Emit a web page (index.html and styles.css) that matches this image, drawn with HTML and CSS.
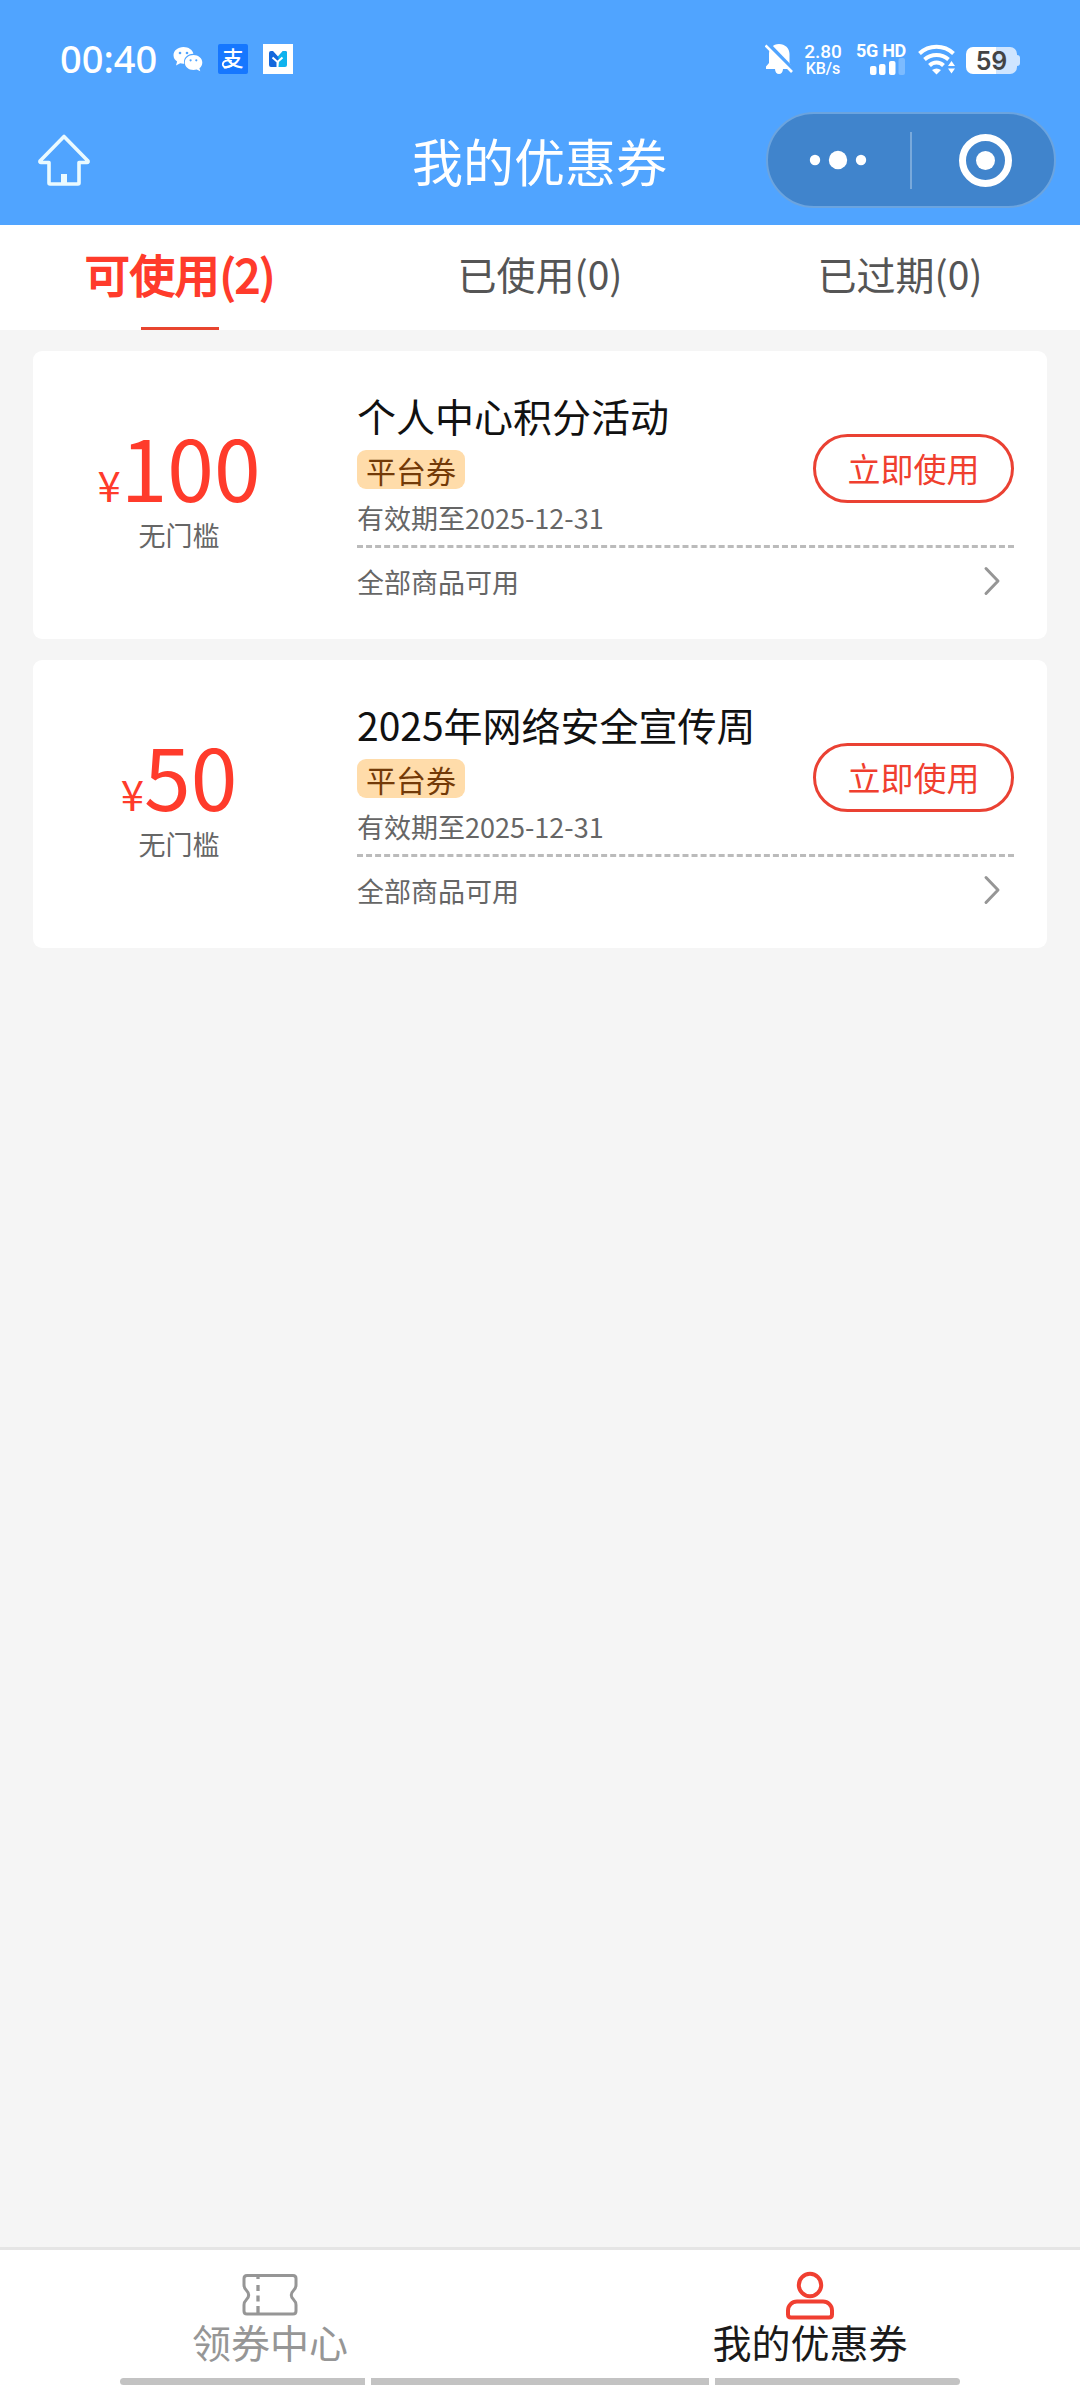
FILE: index.html
```html
<!DOCTYPE html>
<html lang="zh-CN">
<head>
<meta charset="utf-8">
<meta name="viewport" content="width=device-width">
<title>我的优惠券</title>
<link rel="stylesheet" href="styles.css">
</head>
<body>
<div class="app">
  <header class="header">
    <div class="status">
      <span class="clock">00:40</span>
      <svg class="ic-wechat" width="30" height="26" viewBox="0 0 30 26"><g fill="#fff"><path d="M10.500 1C4.800 1 .5 4.600.5 9.300c0 2.700 1.500 4.900 3.600 6.300L3 19.500l4.200-2.200c1.200.4 2.800.5 4 .4C10 12 14.500 7.600 20.400 7.700 19.500 3.800 15.500 1 10.500 1z"/><path d="M20.500 9c-5 0-8.700 3.300-8.700 7.400s3.700 7.500 8.700 7.500c1.100 0 2.200-.2 3.200-.5l3.600 1.900-.9-3.100c1.800-1.400 2.900-3.500 2.900-5.800C29.300 12.300 25.400 9 20.500 9z"/></g><g fill="#50a4ff"><circle cx="7" cy="7" r="1.300"/><circle cx="14" cy="7" r="1.300"/><circle cx="17.600" cy="14.300" r="1.100"/><circle cx="23.300" cy="14.300" r="1.100"/></g></svg>
      <span class="alipay">支<svg class="alipay-tail" width="30" height="30" viewBox="0 0 30 30"><path d="M14 17C9 15.500 4.800 17 4.800 20.500s6.700 4.500 11.700-1.500" fill="none" stroke="#fff" stroke-width="1.800"/></svg></span>
      <svg class="ic-m" width="30" height="30" viewBox="0 0 30 30"><path fill="#fff" d="M0 0h30v30H0z"/><path fill="#1467dc" d="M6 9q0-2 2-2h2l5 5.500L20 7h2q2 0 2 2v4l-9 5-1 5H8q-2 0-2-2z"/><path fill="#0fb3ee" d="M24 9q0-2-2-2h-2l-5 5.500 1 4.500-1 6h7q2 0 2-2z"/><path d="M9.500 13.500l5 4.500 5-4.500M14.500 17.500V24" fill="none" stroke="#fff" stroke-width="2"/></svg>
      <div class="status-right">
        <svg class="ic-bell" width="28" height="32" viewBox="0 0 28 32"><path fill="#fff" d="M14 1c6 0 10.500 4.300 10.500 10v9l3 5v1H18c0 3-1.800 5-4 5s-4-2-4-5H1v-2.500L4 20v-9C4 5.500 8 1 14 1z"/><path d="M1.500 0l28 29" stroke="#50a4ff" stroke-width="5"/><path d="M.5 2.500l26.500 26.500" stroke="#fff" stroke-width="2.600"/></svg>
        <div class="speed"><span class="speed-n">2.80</span><span class="speed-u">KB/s</span></div>
        <div class="signal"><span class="net">5G HD</span><svg width="36" height="17" viewBox="0 0 36 17" fill="#fff"><rect x="1" y="8" width="6.500" height="9" rx="2"/><rect x="10" y="6" width="6.500" height="11" rx="2"/><rect x="20" y="3" width="6.500" height="14" rx="2"/><rect x="29.500" y="0" width="6.500" height="17" rx="2" opacity=".25"/></svg></div>
        <svg class="ic-wifi" width="38" height="31" viewBox="0 0 38 31"><g fill="none" stroke="#fff" stroke-width="4"><path d="M1.500 9.500C11 .5 26 .5 35.500 9.500"/><path d="M6.500 15.500c7-6 17-6 24 0"/><path d="M11.500 21.500c4-4 10-4 14 0"/></g><path d="M14 26q4.500-3 9 0l-4.500 4.500z" fill="#fff"/><path d="M33.500 13l5.500 7.500-5.500 10-5.500-10z" fill="#50a4ff"/><path d="M33.500 17l3.500 5h-7zM33.500 29.500l3.500-5h-7z" fill="#fff"/></svg>
        <div class="battery"><span>59</span></div>
      </div>
    </div>
    <div class="navbar">
      <svg class="ic-home" width="54" height="54" viewBox="0 0 54 54" fill="none" stroke="#eafaff" stroke-width="3.600" stroke-linejoin="round"><path d="M27 3.500L3 28q-.5 1.500 1 1.500h8V50q0 1 1 1h28q1 0 1-1V29.500h8q1.500 0 1-1.500z"/><path d="M27 41v10" stroke-width="6"/></svg>
      <h1 class="title">我的优惠券</h1>
      <div class="capsule">
        <svg width="286" height="92" viewBox="0 0 286 92" fill="#fff"><circle cx="47" cy="46" r="5.200"/><circle cx="70" cy="46" r="9.200"/><circle cx="93" cy="46" r="5.200"/><path d="M142 18h2v57h-2z" opacity=".3"/><circle cx="217.500" cy="46.500" r="23" fill="none" stroke="#fff" stroke-width="7"/><circle cx="217.500" cy="46.500" r="9.500"/></svg>
      </div>
    </div>
  </header>
  <nav class="tabs">
    <div class="tab tab-on">可使用(2)</div>
    <div class="tab">已使用(0)</div>
    <div class="tab">已过期(0)</div>
  </nav>
  <main class="list">
    <article class="card">
      <div class="amount"><div class="price"><span class="yen">¥</span>100</div><div class="limit">无门槛</div></div>
      <div class="body">
        <div class="top">
          <div class="info"><h2 class="name">个人中心积分活动</h2><span class="tag">平台券</span><div class="date">有效期至2025-12-31</div></div>
          <div class="use">立即使用</div>
        </div>
        <div class="scope"><span>全部商品可用</span><svg class="chev" width="18" height="30" viewBox="0 0 18 30"><path d="M3 2.500L15 15 3 27.500" fill="none" stroke="#969696" stroke-width="3" stroke-linecap="round" stroke-linejoin="round"/></svg></div>
      </div>
    </article>
    <article class="card">
      <div class="amount"><div class="price"><span class="yen">¥</span>50</div><div class="limit">无门槛</div></div>
      <div class="body">
        <div class="top">
          <div class="info"><h2 class="name">2025年网络安全宣传周</h2><span class="tag">平台券</span><div class="date">有效期至2025-12-31</div></div>
          <div class="use">立即使用</div>
        </div>
        <div class="scope"><span>全部商品可用</span><svg class="chev" width="18" height="30" viewBox="0 0 18 30"><path d="M3 2.500L15 15 3 27.500" fill="none" stroke="#969696" stroke-width="3" stroke-linecap="round" stroke-linejoin="round"/></svg></div>
      </div>
    </article>
  </main>
  <footer class="tabbar">
    <div class="item"><svg width="60" height="50" viewBox="0 0 60 50" fill="none" stroke="#969696" stroke-width="3"><path d="M7 5.500h46q3 0 3 3V15q0 3-2.500 5.500-4.500 4.500 0 9Q56 32 56 35v6q0 3-3 3H7q-3 0-3-3v-6q0-3 2.500-5.500 4.500-4.500 0-9Q4 18 4 15V8.500q0-3 3-3z"/><path d="M18 6v3M18 15v6M18 25.500v6M18 36v7" stroke-width="3.300"/></svg><span>领券中心</span></div>
    <div class="item item-on"><svg width="60" height="50" viewBox="0 0 60 50" fill="none" stroke="#f03f31" stroke-width="4"><circle cx="30" cy="15" r="11.200"/><path d="M17 33h26c5 0 9 4 9 9v4q0 3-3 3H11q-3 0-3-3v-4c0-5 4-9 9-9z" transform="translate(0 -1.500)"/></svg><span>我的优惠券</span></div>
    <div class="gesture"><i class="g1"></i><i class="g2"></i><i class="g3"></i></div>
  </footer>
</div>
</body>
</html>
```
FILE: styles.css
```css
* { box-sizing: border-box; margin: 0; padding: 0; }
body { font-family: "Noto Sans CJK SC", sans-serif; background: #f5f5f5; }
svg { display: block; flex: none; }
.app { width: 1080px; height: 2388px; display: flex; flex-direction: column; overflow: hidden; }
.header { height: 225px; background: #50a4ff; color: #fff; }
.status { height: 112px; padding: 43px 60px 0 60px; display: flex; align-items: flex-start; }
.clock { width: 98px; font: 500 38px/30px "Noto Sans", sans-serif; white-space: nowrap; }
.ic-wechat { margin: 3px 0 0 15px; }
.alipay { position: relative; width: 30px; height: 30px; margin: 1px 0 0 15px; border-radius: 2px; background: #1677ff; text-align: center; font-weight: 500; font-size: 21px; line-height: 27px; }
.alipay-tail { position: absolute; left: 0; top: 0; }
.ic-m { margin: 1px 0 0 15px; }
.status-right { margin-left: auto; display: flex; align-items: flex-start; }
.ic-bell { margin-right: 10px; }
.speed { width: 40px; display: flex; flex-direction: column; align-items: center; font-family: Roboto, sans-serif; font-weight: 500; }
.speed-n { font-size: 19px; line-height: 17px; }
.speed-u { font-size: 16px; line-height: 17px; }
.signal { width: 50px; margin-left: 13px; display: flex; flex-direction: column; align-items: flex-end; }
.signal svg { margin-right: 1px; }
.net { width: 100%; font: 700 18px/15px Roboto, sans-serif; letter-spacing: -0.3px; white-space: nowrap; }
.ic-wifi { margin: 1px 0 0 12px; }
.battery { position: relative; width: 51px; height: 27px; margin: 4px 3px 0 10px; border-radius: 7px; background: linear-gradient(90deg, #fff 59%, #cfe5ff 59%); color: #444; text-align: center; font: 600 25px/28px Inter, sans-serif; }
.battery::after { content: ""; position: absolute; right: -3px; top: 8px; width: 3px; height: 11px; border-radius: 0 3px 3px 0; background: #cfe5ff; }
.navbar { height: 96px; display: grid; grid-template-columns: 339px 1fr 290px; padding: 0 24px 0 37px; align-items: center; }
.title { padding-left: 36px; font-size: 51px; line-height: 96px; font-weight: 400; white-space: nowrap; }
.capsule { height: 96px; border: 2px solid #6ba4df; border-radius: 48px; background: #4084cc; }
.tabs { height: 105px; background: #fff; display: flex; }
.tab { flex: 1; text-align: center; font-size: 39px; line-height: 96px; color: #555; position: relative; }
.tab-on { color: #ff3b2b; font-size: 45px; line-height: 98px; -webkit-text-stroke: 1.8px #ff3b2b; }
.tab-on::after { content: ""; position: absolute; left: 141px; bottom: 0; width: 78px; height: 3px; background: #e8452f; }
.list { flex: 1; padding: 21px 33px; display: flex; flex-direction: column; gap: 21px; }
.card { height: 288px; background: #fff; border-radius: 9px; display: grid; grid-template-columns: 292px 1fr; }
.amount { padding-top: 73px; text-align: center; }
.price { font-size: 84px; line-height: 84px; height: 84px; color: #ff3b2b; }
.yen { font-size: 42px; line-height: 42px; }
.limit { margin-top: 7px; font-size: 27px; line-height: 39px; color: #666; }
.body { padding: 36px 33px 0 32px; }
.top { height: 158px; display: flex; justify-content: space-between; align-items: flex-start; }
.name { height: 58px; font-size: 39px; line-height: 56px; font-weight: 400; color: #111; }
.tag { display: block; width: 108px; height: 39px; margin-top: 5px; border-radius: 9px; background: #ffdcaa; color: #733a08; font-size: 30px; line-height: 40px; text-align: center; }
.date { margin-top: 9px; font-size: 27px; line-height: 39px; color: #666; }
.use { width: 201px; height: 69px; margin-top: 47px; border: 3px solid #ea4133; border-radius: 35px; color: #f03f2f; font-size: 33px; line-height: 62px; text-align: center; }
.scope { height: 70px; border-top: 3px dashed #bbb; display: flex; justify-content: space-between; align-items: center; font-size: 27px; line-height: 39px; color: #666; }
.chev { margin: 0 13px 2px 0; }
.tabbar { height: 141px; background: #fff; border-top: 3px solid #e5e5e5; display: grid; grid-template-columns: 1fr 1fr; position: relative; }
.item { display: flex; flex-direction: column; align-items: center; padding-top: 20px; font-size: 39px; color: #969696; }
.item span { line-height: 42px; }
.item-on { color: #1a1a1a; }
.gesture { position: absolute; left: 120px; bottom: 3px; width: 840px; height: 7px; display: flex; gap: 6px; }
.gesture i { background: #c3c3c3; }
.g1 { width: 245px; border-radius: 4px 0 0 4px; }
.g2 { width: 338px; }
.g3 { width: 245px; border-radius: 0 4px 4px 0; }
```
